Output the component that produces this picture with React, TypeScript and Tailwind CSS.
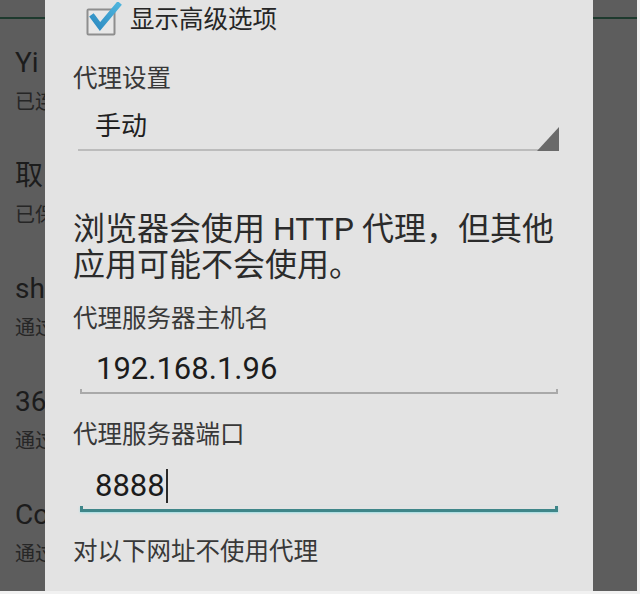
import React from "react";

const FONT = 'Roboto, "Noto Sans CJK SC", "Noto Sans", sans-serif';

function BgItem({ title, sub }: { title: string; sub: string }) {
  return (
    <div className="h-[113px] pt-[26px] pl-[15px] whitespace-nowrap">
      <div className="h-[36px] leading-[36px] text-[28px] text-[#1c1c1c]">{title}</div>
      <div className="mt-[7px] h-[28px] leading-[28px] text-[20px] text-[#262626]">{sub}</div>
    </div>
  );
}

function Checkbox() {
  return (
    <svg width="36" height="36" viewBox="0 0 36 36" className="shrink-0">
      <rect x="1.5" y="7.5" width="27" height="25" rx="1" fill="#e8e8e8" stroke="#8e8e8e" strokeWidth="2" />
      <defs>
        <linearGradient id="ck" x1="0" y1="1" x2="1" y2="0">
          <stop offset="0" stopColor="#2e8cc2" />
          <stop offset="1" stopColor="#4db3dc" />
        </linearGradient>
      </defs>
      <path d="M7 15 L14 24.5 L32 3" fill="none" stroke="url(#ck)" strokeWidth="5.5" strokeLinecap="square" strokeLinejoin="miter" />
    </svg>
  );
}

export default function App() {
  return (
    <div className="w-[640px] h-[594px] bg-[#f1f1f1] overflow-hidden" style={{ fontFamily: FONT }}>
      <div className="flex w-[637px] h-[591px]">
        {/* left dimmed list */}
        <div className="w-[45px] shrink-0 bg-[#5d5d5d] overflow-hidden">
          <div className="h-[17px]" />
          <div className="h-[2px] bg-[#1e3a2e]" />
          <BgItem title="Yi" sub="已连接" />
          <BgItem title="取" sub="已保存" />
          <BgItem title="sh" sub="通过" />
          <BgItem title="36" sub="通过" />
          <BgItem title="Co" sub="通过" />
        </div>

        {/* dialog */}
        <div className="w-[548px] shrink-0 bg-[#e3e3e3] flex flex-col">
          <div className="h-[40px] flex items-center pl-[41px]">
            <Checkbox />
            <span className="ml-[8px] text-[24.5px] leading-[40px] text-[#262626]">显示高级选项</span>
          </div>

          <div className="mt-[20px] h-[38px] leading-[38px] pl-[28px] text-[24.5px] text-[#383838]">代理设置</div>

          <div className="mt-[5px] ml-[33px] w-[481px] relative border-b-2 border-[#bcbcbc]">
            <div className="h-[46px] leading-[46px] pl-[17px] text-[26px] text-[#1f1f1f]">手动</div>
            <svg width="22" height="24" viewBox="0 0 22 24" className="absolute right-0 bottom-[-2px]">
              <path d="M22 0 L22 24 L0 24 Z" fill="#6a6a6a" />
            </svg>
          </div>

          <div className="mt-[60px] pl-[28px] text-[32px] leading-[36px] text-[#2b2b2b] whitespace-nowrap">
            浏览器会使用 HTTP 代理，但其他
            <br />
            应用可能不会使用。
          </div>

          <div className="mt-[18px] h-[36px] leading-[36px] pl-[28px] text-[24.5px] text-[#383838]">代理服务器主机名</div>

          <div className="ml-[35px] w-[478px]">
            <div className="mt-[12px] h-[40px] leading-[40px] pl-[16px] text-[31px] text-[#1c1c1c]">192.168.1.96</div>
            <div className="h-[5px] border-x-2 border-b-2 border-[#a9a9a9]" />
          </div>

          <div className="mt-[23px] h-[36px] leading-[36px] pl-[28px] text-[24.5px] text-[#383838]">代理服务器端口</div>

          <div className="ml-[35px] w-[478px]">
            <div className="mt-[13px] h-[40px] pl-[15px] flex items-center text-[31px] text-[#1c1c1c]">
              <span className="leading-[40px]">8888</span>
              <span className="ml-[1px] w-[2px] h-[34px] bg-[#2a2a2a]" />
            </div>
            <div className="h-[6px] border-x-[3px] border-b-[3px] border-[#3f8689] shadow-[0_1px_2px_rgba(120,220,230,0.6)]" />
          </div>

          <div className="mt-[22px] h-[36px] leading-[36px] pl-[28px] text-[24.5px] text-[#383838]">对以下网址不使用代理</div>
        </div>

        {/* right dimmed strip */}
        <div className="w-[44px] shrink-0 bg-[#5d5d5d]">
          <div className="h-[17px]" />
          <div className="h-[2px] bg-[#1e3a2e]" />
        </div>
      </div>
    </div>
  );
}
